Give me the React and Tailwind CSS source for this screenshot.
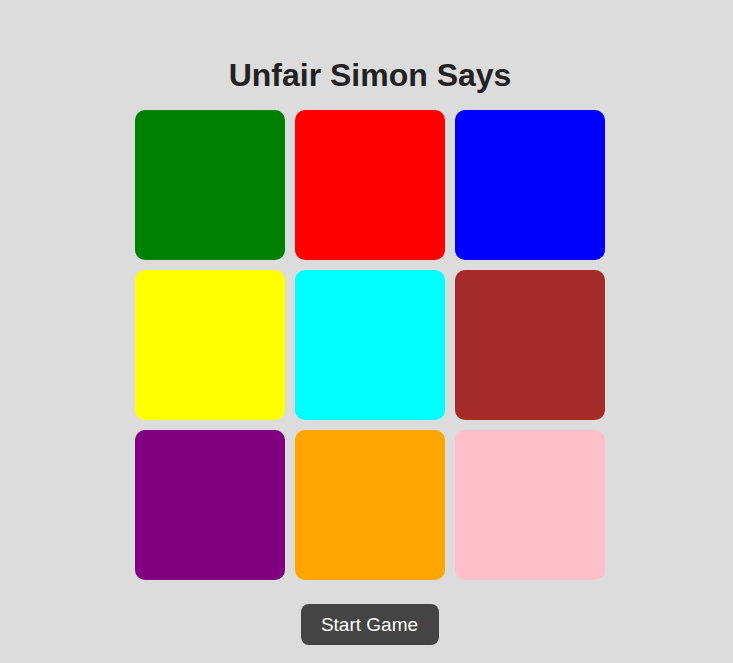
export default function App() {
  const tiles = [
    "bg-[#008000]",
    "bg-[#ff0000]",
    "bg-[#0000ff]",
    "bg-[#ffff00]",
    "bg-[#00ffff]",
    "bg-[#a52a2a]",
    "bg-[#800080]",
    "bg-[#ffa500]",
    "bg-[#ffc0cb]",
  ];
  return (
    <div
      className="min-h-[663px] w-full bg-[#dcdcdc] pl-[7px] pt-[57px] flex flex-col items-center"
      style={{ fontFamily: '"Liberation Sans", Arial, sans-serif' }}
    >
      <h1 className="text-[32px] leading-[37px] font-bold text-[#222222] m-0">
        Unfair Simon Says
      </h1>
      <div className="mt-4 grid grid-cols-[repeat(3,150px)] gap-[10px]">
        {tiles.map((c, i) => (
          <div key={i} className={`${c} w-[150px] h-[150px] rounded-[10px]`} />
        ))}
      </div>
      <button className="mt-6 ml-[-1px] w-[138px] h-[41px] rounded-[8px] bg-[#444444] text-white text-[19px] leading-none flex items-center justify-center">
        Start Game
      </button>
    </div>
  );
}
